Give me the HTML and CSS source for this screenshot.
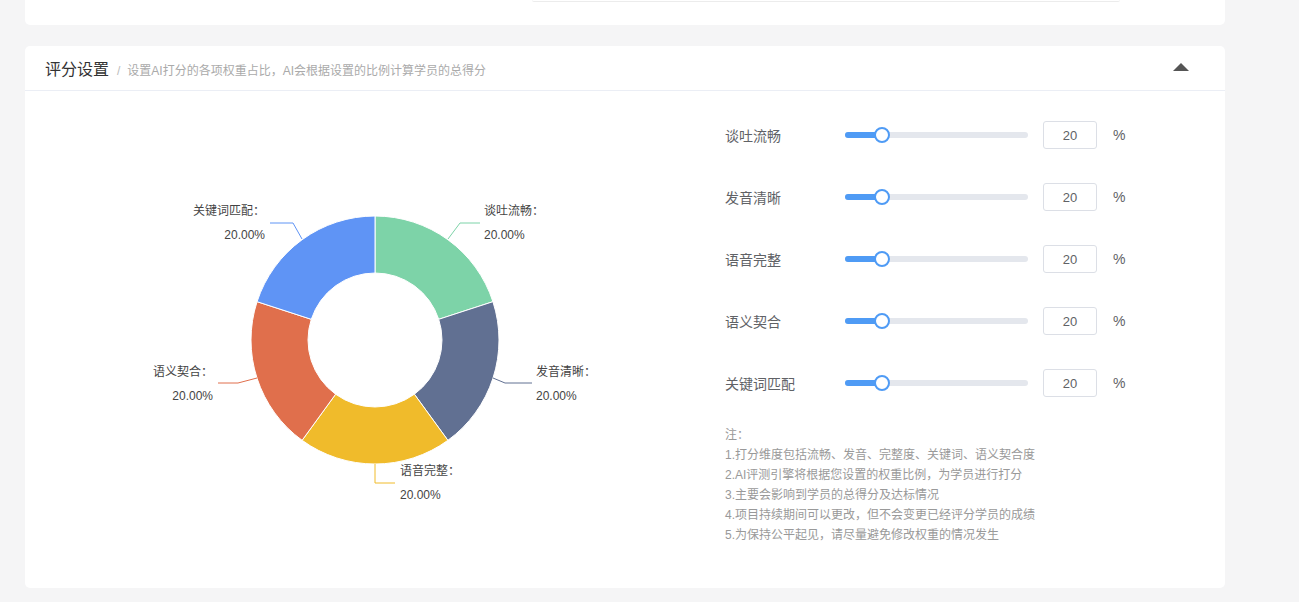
FILE: index.html
```html
<!DOCTYPE html>
<html lang="zh-CN">
<head>
    <meta charset="UTF-8">
    <meta name="viewport" content="width=device-width, initial-scale=1.0">
    <title>评分设置</title>
    <link rel="stylesheet" href="styles.css">
</head>
<body>
    <div class="card card-top">
        <div class="prev-box"></div>
    </div>

    <div class="card">
        <div class="card-header">
            <div class="title">
                <span class="title-main">评分设置</span>
                <span class="title-sep">/</span>
                <span class="title-sub">设置AI打分的各项权重占比，AI会根据设置的比例计算学员的总得分</span>
            </div>
            <div class="collapse-btn"></div>
        </div>

        <div class="card-body">
            <div class="chart">
                <svg width="675" height="497" viewBox="0 0 675 497">
                    <g stroke="#fff" stroke-width="1">
                        <!-- 5 slices, 72deg each, clockwise from top -->
                        <path fill="#7dd3a8" d="M350 125 A124 124 0 0 1 467.93 210.68 L413.72 228.3 A67 67 0 0 0 350 182 Z"/>
                        <path fill="#617092" d="M467.93 210.68 A124 124 0 0 1 422.89 349.32 L389.38 303.2 A67 67 0 0 0 413.72 228.3 Z"/>
                        <path fill="#f0bb2b" d="M422.89 349.32 A124 124 0 0 1 277.11 349.32 L310.62 303.2 A67 67 0 0 0 389.38 303.2 Z"/>
                        <path fill="#e06f4c" d="M277.11 349.32 A124 124 0 0 1 232.07 210.68 L286.28 228.3 A67 67 0 0 0 310.62 303.2 Z"/>
                        <path fill="#5f94f5" d="M232.07 210.68 A124 124 0 0 1 350 125 L350 182 A67 67 0 0 0 286.28 228.3 Z"/>
                    </g>
                    <g fill="none" stroke-width="1">
                        <polyline stroke="#7dd3a8" points="423,148 435,132 455,132"/>
                        <polyline stroke="#617092" points="468,287 480,292 507,292"/>
                        <polyline stroke="#f0bb2b" points="350,373 350,392 370,392"/>
                        <polyline stroke="#e06f4c" points="232,287 213,292 193,292"/>
                        <polyline stroke="#5f94f5" points="277,148 268,132 245,132"/>
                    </g>
                    <g class="chart-label">
                        <text x="459" y="124">谈吐流畅：</text>
                        <text x="459" y="148">20.00%</text>
                        <text x="511" y="285">发音清晰：</text>
                        <text x="511" y="309">20.00%</text>
                        <text x="375" y="384">语音完整：</text>
                        <text x="375" y="408">20.00%</text>
                        <text x="188" y="285" text-anchor="end">语义契合：</text>
                        <text x="188" y="309" text-anchor="end">20.00%</text>
                        <text x="240" y="124" text-anchor="end">关键词匹配：</text>
                        <text x="240" y="148" text-anchor="end">20.00%</text>
                    </g>
                </svg>
            </div>

            <div class="settings">
                <div class="row">
                    <div class="row-label">谈吐流畅</div>
                    <div class="slider"><div class="slider-fill"></div><div class="slider-thumb"></div></div>
                    <div class="num-input">20</div>
                    <div class="unit">%</div>
                </div>
                <div class="row">
                    <div class="row-label">发音清晰</div>
                    <div class="slider"><div class="slider-fill"></div><div class="slider-thumb"></div></div>
                    <div class="num-input">20</div>
                    <div class="unit">%</div>
                </div>
                <div class="row">
                    <div class="row-label">语音完整</div>
                    <div class="slider"><div class="slider-fill"></div><div class="slider-thumb"></div></div>
                    <div class="num-input">20</div>
                    <div class="unit">%</div>
                </div>
                <div class="row">
                    <div class="row-label">语义契合</div>
                    <div class="slider"><div class="slider-fill"></div><div class="slider-thumb"></div></div>
                    <div class="num-input">20</div>
                    <div class="unit">%</div>
                </div>
                <div class="row">
                    <div class="row-label">关键词匹配</div>
                    <div class="slider"><div class="slider-fill"></div><div class="slider-thumb"></div></div>
                    <div class="num-input">20</div>
                    <div class="unit">%</div>
                </div>

                <div class="notes">
                    <p>注：</p>
                    <p>1.打分维度包括流畅、发音、完整度、关键词、语义契合度</p>
                    <p>2.AI评测引擎将根据您设置的权重比例，为学员进行打分</p>
                    <p>3.主要会影响到学员的总得分及达标情况</p>
                    <p>4.项目持续期间可以更改，但不会变更已经评分学员的成绩</p>
                    <p>5.为保持公平起见，请尽量避免修改权重的情况发生</p>
                </div>
            </div>
        </div>
    </div>
</body>
</html>
```

FILE: styles.css
```css
body {
    margin: 0;
    background-color: #f5f5f6;
    font-family: "Liberation Sans", "Noto Sans CJK SC", sans-serif;
    color: #333;
}

.card {
    width: 1200px;
    margin-left: 25px;
    background-color: #fff;
    border-radius: 5px;
}

.card-top {
    height: 25px;
    margin-bottom: 21px;
    border-radius: 0 0 5px 5px;
}

.prev-box {
    width: 588px;
    height: 1px;
    margin-left: 507px;
    border-bottom: 1px solid #ececec;
    border-radius: 0 0 4px 4px;
}

.card-header {
    display: flex;
    align-items: center;
    justify-content: space-between;
    height: 44px;
    padding: 0 36px 0 20px;
    border-bottom: 1px solid #ebeef5;
}

.title {
    display: flex;
    align-items: baseline;
}

.title-main {
    font-size: 16px;
    color: #333;
}

.title-sep {
    margin: 0 7px 0 8px;
    font-size: 12px;
    color: #bbb;
}

.title-sub {
    font-size: 12px;
    color: #aaa;
}

.collapse-btn {
    width: 0;
    height: 0;
    border-left: 8px solid transparent;
    border-right: 8px solid transparent;
    border-bottom: 8px solid #555;
    margin-top: -2px;
}

.card-body {
    display: flex;
    height: 497px;
}

.chart {
    width: 675px;
}

.chart svg {
    display: block;
}

.chart-label text {
    font-family: "Liberation Sans", "Noto Sans CJK SC", sans-serif;
    font-size: 12px;
    fill: #444;
}

.settings {
    margin-left: 25px;
    padding-top: 30px;
    display: flex;
    flex-direction: column;
    gap: 34px;
}

.row {
    display: flex;
    align-items: center;
    height: 28px;
}

.row-label {
    width: 120px;
    font-size: 14px;
    color: #606266;
}

.slider {
    position: relative;
    width: 183px;
    height: 6px;
    border-radius: 3px;
    background-color: #e4e7ed;
}

.slider-fill {
    width: 37px;
    height: 6px;
    border-radius: 3px;
    background-color: #4f9bf5;
}

.slider-thumb {
    position: absolute;
    left: 29px;
    top: -5px;
    width: 12px;
    height: 12px;
    border: 2px solid #4f9bf5;
    border-radius: 50%;
    background-color: #fff;
}

.num-input {
    display: flex;
    align-items: center;
    justify-content: center;
    width: 52px;
    height: 26px;
    margin-left: 15px;
    border: 1px solid #dcdfe6;
    border-radius: 3px;
    font-size: 13px;
    color: #606266;
}

.unit {
    margin-left: 16px;
    font-size: 14px;
    color: #606266;
}

.notes {
    margin-top: -6px;
}

.notes p {
    margin: 0;
    font-size: 12px;
    line-height: 20px;
    color: #999;
}
```
